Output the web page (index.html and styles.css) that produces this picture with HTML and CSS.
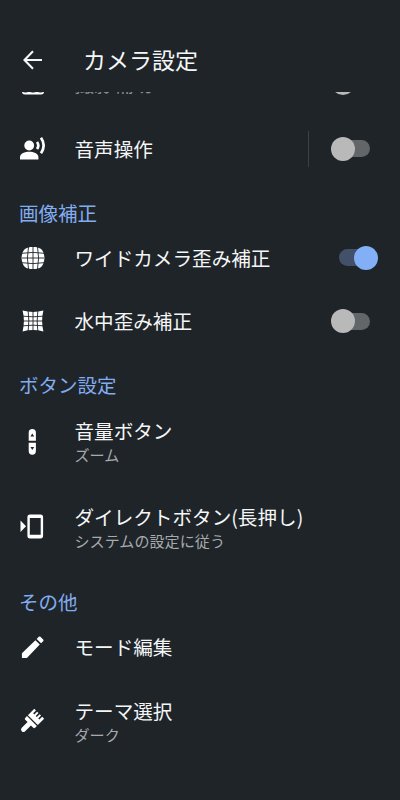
FILE: index.html
```
<!DOCTYPE html>
<html lang="ja">
<head>
<meta charset="utf-8">
<title>カメラ設定</title>
<link rel="stylesheet" href="styles.css">
</head>
<body>
<header class="bar">
  <svg class="back" viewBox="0 0 20 20"><path d="M19 10H2M10 1.300 1.500 10l8.500 8.700"/></svg>
  <h1>カメラ設定</h1>
</header>
<main class="scroll">
  <div class="list">
    <div class="row dim">
      <svg class="icon" viewBox="0 0 28 28"><path d="M3 4h22v18.500q0 3-3 3H6q-3 0-3-3z"/><path class="cut" d="M3 22.300l3.500.9 3.500-.9 4 .9 4-.9 3.500.9 3.500-.9"/></svg>
      <div class="text"><span class="label">撮影補助</span></div>
      <span class="switch"></span>
    </div>
    <div class="row">
      <svg class="icon" viewBox="0 0 28 28"><circle cx="10.200" cy="10.500" r="4.900"/><path d="M1 24.500v-2.500c0-3.500 5-5.200 9.200-5.200s9.200 1.700 9.200 5.200v2.500z"/><path class="line" d="M18 7q2.700 3.500 0 7M22 2.800q5.300 7.700 0 15.400"/></svg>
      <div class="text"><span class="label">音声操作</span></div>
      <span class="divider"></span>
      <span class="switch"></span>
    </div>
    <h2>画像補正</h2>
    <div class="row">
      <svg class="icon" viewBox="0 0 28 28"><path d="M14 2.900c3.700 0 6.300.6 8.100 2.100s3.300 5.200 3.300 9-1.500 7.500-3.300 9-4.400 2.100-8.100 2.100-6.300-.6-8.100-2.100S2.600 17.800 2.600 14s1.500-7.500 3.300-9 4.400-2.100 8.100-2.100z"/><path class="cut" d="M9.500 3Q7.300 14 9.500 25M18.500 3q2.200 11 0 22M14 3v22M3 9.300Q14 7.500 25 9.300M3 18.700q11 1.800 22 0M3 14h22"/></svg>
      <div class="text"><span class="label">ワイドカメラ歪み補正</span></div>
      <span class="switch on"></span>
    </div>
    <div class="row">
      <svg class="icon" viewBox="0 0 28 28"><path d="M3.600 3.600Q14 6.200 24.400 3.600 21.800 14 24.400 24.400 14 21.800 3.600 24.400 6.200 14 3.600 3.600z"/><path class="cut" d="M9.200 4q1.200 10 0 20M14 4v20M18.800 4q-1.200 10 0 20M4 9.200q10 1.200 20 0M4 14h20M4 18.800q10-1.200 20 0"/></svg>
      <div class="text"><span class="label">水中歪み補正</span></div>
      <span class="switch"></span>
    </div>
    <h2>ボタン設定</h2>
    <div class="row tall">
      <svg class="icon" viewBox="0 0 28 28"><path d="M9.700 12.800V4.500Q9.700.9 13.300.9t3.600 3.600v8.300zM9.700 14.800v8.300q0 3.600 3.600 3.600t3.600-3.600v-8.300z"/><path class="hole" d="m11.400 8.500 1.900-3 1.900 3zM11.400 19.100l1.900 3 1.900-3z"/></svg>
      <div class="text"><span class="label">音量ボタン</span><span class="sub">ズーム</span></div>
    </div>
    <div class="row tall">
      <svg class="icon" viewBox="0 0 28 28"><path d="M1.500 7.500 7 13.200l-5.500 5.700z"/><path fill-rule="evenodd" d="M11 1.500h10.500q2.600 0 2.600 2.600v18.700q0 2.600-2.600 2.600H11q-2.600 0-2.600-2.600V4.100q0-2.600 2.600-2.600zm-.2 3.600v16.700h10.900V5.100z"/></svg>
      <div class="text"><span class="label">ダイレクトボタン(長押し)</span><span class="sub">システムの設定に従う</span></div>
    </div>
    <h2>その他</h2>
    <div class="row">
      <svg class="icon" viewBox="0 0 24 24"><path d="M2.500 17.250V21.500h4.250L17.810 9.940l-3.750-3.750zM20.710 7.040a1 1 0 0 0 0-1.410l-2.340-2.340a1 1 0 0 0-1.410 0l-1.830 1.830 3.750 3.750 1.830-1.830z"/></svg>
      <div class="text"><span class="label">モード編集</span></div>
    </div>
    <div class="row tall">
      <svg class="icon" viewBox="0 0 28 28"><g transform="translate(13.500 12.500) rotate(45)"><path d="M-7-9.500h2.400v4h1.600v-4h2v4H.600v-4h2v4h1.600v-4H7v9H-7zM-7 .8H7v2.500q0 1.300-1.300 1.300H2.400v8.200q0 2.400-2.400 2.400t-2.400-2.400V4.600h-3.300Q-7 4.600-7 3.300z"/></g></svg>
      <div class="text"><span class="label">テーマ選択</span><span class="sub">ダーク</span></div>
    </div>
  </div>
</main>
</body>
</html>
```
FILE: styles.css
```
* { box-sizing: border-box; }
body {
  margin: 0;
  height: 800px;
  overflow: hidden;
  display: flex;
  flex-direction: column;
  background: #1f2428;
  color: #f4f6f7;
  font-family: "Noto Sans CJK JP", sans-serif;
}
.bar {
  height: 92px;
  padding: 27px 23px 0;
  display: flex;
  align-items: center;
  gap: 40px;
}
.back {
  width: 20px;
  height: 20px;
  margin-top: 1px;
  fill: none;
  stroke: #f4f6f7;
  stroke-width: 2.1;
}
h1 {
  margin: 0;
  font-size: 23px;
  line-height: 32px;
  padding-bottom: 2px;
  font-weight: 400;
}
.scroll {
  flex: 1;
  overflow: hidden;
}
.list { margin-top: -40.7px; }
.row {
  height: 63.8px;
  padding: 0 22px 0 19px;
  display: flex;
  align-items: center;
}
.row.tall { height: 86px; }
.row.dim { margin-bottom: 1.8px; }
h2 + .row { padding-top: 0.6px; }
.icon {
  width: 28px;
  height: 28px;
  flex: none;
  margin-right: 27.500px;
  fill: #fff;
}
.icon .line {
  fill: none;
  stroke: #fff;
  stroke-width: 2.7;
}
.icon .cut {
  fill: none;
  stroke: #1f2428;
  stroke-width: 0.9;
}
.icon .hole { fill: #1f2428; }
.text {
  flex: 1;
  display: flex;
  flex-direction: column;
  white-space: nowrap;
}
.label {
  font-size: 19.6px;
  line-height: 26px;
}
.sub {
  font-size: 15.1px;
  line-height: 21.500px;
  color: #a6aaad;
}
.dim .text { padding-top: 1px; }
.dim .label { color: #8b9093; }
h2 {
  margin: 0;
  height: 45px;
  padding: 19px 19px 0;
  font-size: 19.5px;
  line-height: 26px;
  font-weight: 400;
  color: #82acf0;
}
.divider {
  width: 1px;
  height: 36px;
  margin-right: 23px;
  background: #3c4145;
}
.switch {
  position: relative;
  width: 46px;
  height: 24px;
  display: flex;
  align-items: center;
}
.switch::before {
  content: "";
  width: 38px;
  height: 17px;
  border-radius: 9px;
  background: #636669;
}
.switch::after {
  content: "";
  position: absolute;
  left: -1px;
  top: 0;
  width: 24px;
  height: 24px;
  border-radius: 50%;
  background: #b9b9b9;
}
.switch.on { justify-content: flex-end; }
.switch.on::before {
  margin-right: 1px;
  background: #435069;
}
.switch.on::after {
  left: 22px;
  background: #82aff5;
}
```
